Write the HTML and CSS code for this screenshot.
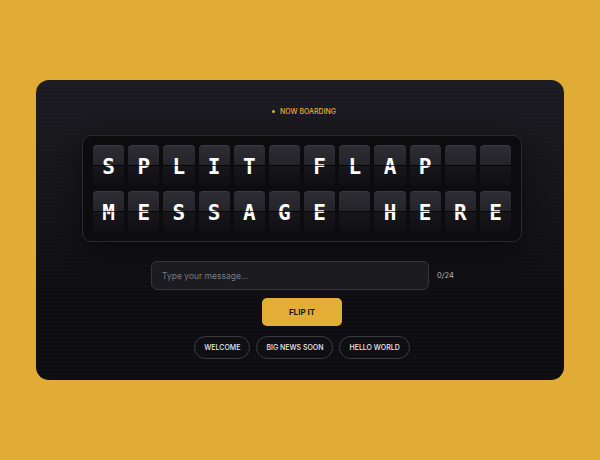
FILE: index.html
```html
<!DOCTYPE html>
<html lang="en">
<head>
  <meta charset="UTF-8"/>
  <meta name="viewport" content="width=device-width, initial-scale=1.0"/>
  <title>Split Flap</title>
  <link rel="stylesheet" href="styles.css">
</head>
<body>

  <div class="card">
    <div class="status"><span class="status-dot"></span>NOW BOARDING</div>

    <div class="board" id="board">
      <div class="row">
        <div class="flap">S</div><div class="flap">P</div><div class="flap">L</div><div class="flap">I</div>
        <div class="flap">T</div><div class="flap"></div><div class="flap">F</div><div class="flap">L</div>
        <div class="flap">A</div><div class="flap">P</div><div class="flap"></div><div class="flap"></div>
      </div>
      <div class="row">
        <div class="flap">M</div><div class="flap">E</div><div class="flap">S</div><div class="flap">S</div>
        <div class="flap">A</div><div class="flap">G</div><div class="flap">E</div><div class="flap"></div>
        <div class="flap">H</div><div class="flap">E</div><div class="flap">R</div><div class="flap">E</div>
      </div>
    </div>

    <div class="input-row">
      <input class="message" type="text" placeholder="Type your message..." maxlength="24">
      <span class="counter">0/24</span>
    </div>

    <button class="flip-btn">FLIP IT</button>

    <div class="presets">
      <button class="chip">WELCOME</button>
      <button class="chip">BIG NEWS SOON</button>
      <button class="chip">HELLO WORLD</button>
    </div>
  </div>

</body>
</html>
```

FILE: styles.css
```css
:root {
  --page-bg: #e0ac35;
  --accent: #e3ae36;
  --card-top: #1c1b21;
  --card-bottom: #0e0e12;
  --text: #f2f2f4;
  --muted: #7a7a82;
}

* {
  box-sizing: border-box;
}

body {
  margin: 0;
  height: 100vh;
  background: var(--page-bg);
  font-family: 'Inter', 'Noto Sans', sans-serif;
  color: var(--text);
  display: flex;
  align-items: center;
  justify-content: center;
}

.card {
  width: 528px;
  height: 300px;
  padding: 26px 0 20px 4px;
  border-radius: 13px;
  background:
    radial-gradient(rgba(255, 255, 255, 0.035) 0.6px, transparent 0.8px) 0 0 / 4px 4px,
    linear-gradient(to bottom, var(--card-top), var(--card-bottom) 70%);
  display: flex;
  flex-direction: column;
  align-items: center;
}

.status {
  height: 10px;
  display: flex;
  align-items: center;
  gap: 5px;
  font-size: 7px;
  font-weight: 500;
  color: var(--accent);
  margin-bottom: 19px;
  margin-left: 4px;
}

.status-dot {
  width: 3px;
  height: 3px;
  border-radius: 50%;
  background: var(--accent);
}

/* the flap board */
.board {
  width: 440px;
  padding: 9px 10px;
  border: 1px solid #2a2a31;
  border-radius: 9px;
  background: #0c0c0f;
  box-shadow: 0 8px 24px rgba(0, 0, 0, 0.45);
  display: flex;
  flex-direction: column;
  gap: 5px;
  margin-bottom: 19px;
}

.row {
  display: flex;
  gap: 4px;
}

.flap {
  position: relative;
  flex: 1;
  height: 41px;
  border-radius: 4px;
  background: linear-gradient(to bottom, #2e2d35 0%, #242329 50%, #17161b 50%, #0f0f12 100%);
  box-shadow: inset 0 1px 0 rgba(255, 255, 255, 0.06);
  display: flex;
  align-items: center;
  justify-content: center;
  padding-top: 3px;
  font-family: 'DejaVu Sans Mono', 'Liberation Mono', monospace;
  font-weight: bold;
  font-size: 21px;
  color: #ffffff;
}

/* hinge line between the two halves */
.flap::after {
  content: '';
  position: absolute;
  left: 0;
  right: 0;
  top: 20px;
  height: 1px;
  background: rgba(0, 0, 0, 0.7);
}

.input-row {
  display: flex;
  align-items: center;
  gap: 8px;
  margin-bottom: 8px;
}

.message {
  width: 278px;
  height: 29px;
  padding: 0 10px;
  border: 1px solid #35353c;
  border-radius: 6px;
  background: #1b1b20;
  color: var(--text);
  font-family: inherit;
  font-size: 8.5px;
  outline: none;
}

.message::placeholder {
  color: var(--muted);
}

.counter {
  width: 16px;
  font-size: 7.5px;
  color: #b4b4ba;
}

.flip-btn {
  width: 80px;
  height: 28px;
  border: none;
  border-radius: 5px;
  background: var(--accent);
  color: #17161a;
  font-family: inherit;
  font-size: 8px;
  font-weight: 700;
  cursor: pointer;
  margin-bottom: 10px;
}

.presets {
  display: flex;
  gap: 6px;
}

.chip {
  height: 23px;
  padding: 0 9px;
  border: 1px solid #3a3a41;
  border-radius: 12px;
  background: transparent;
  color: #ececef;
  font-family: inherit;
  font-size: 7px;
  font-weight: 500;
  cursor: pointer;
}
```
